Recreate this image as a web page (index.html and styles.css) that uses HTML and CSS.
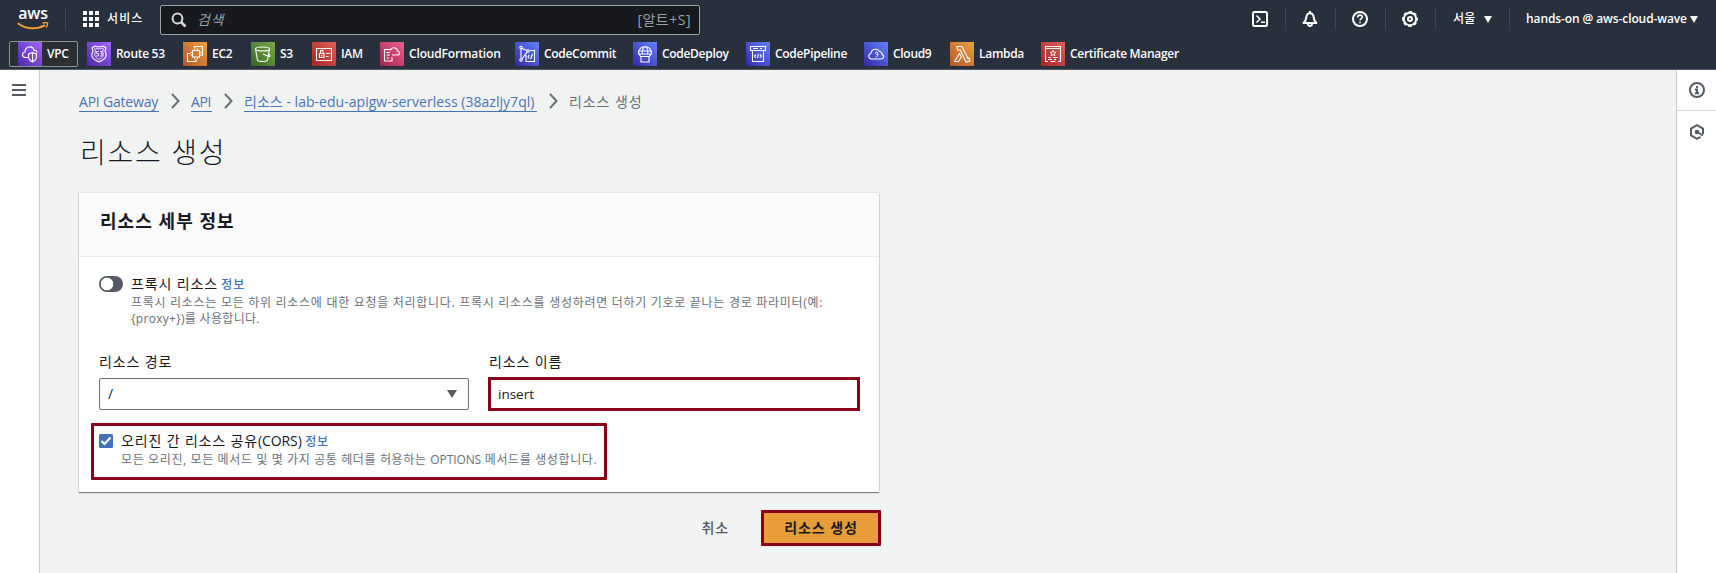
FILE: index.html
```html
<!DOCTYPE html>
<html lang="ko">
<head>
<meta charset="utf-8">
<title>리소스 생성 - API Gateway</title>
<link rel="stylesheet" href="styles.css">
</head>
<body>
<header class="topbar">
  <div class="nav">
    <div class="logo">
      <span>aws</span>
      <svg width="32" height="8" viewBox="0 0 32 8" fill="none" stroke="#f29d35"><path d="M.8 1.300C9 7.500 20 7.800 28 3.200" stroke-width="2"/><path d="M25.500 1.300c2-.9 4.200-.9 5-.3.300 1.300-.5 3.400-1.700 4.600" stroke-width="1.400"/></svg>
    </div>
    <i class="sep sep-logo"></i>
    <svg class="apps" width="16" height="16" viewBox="0 0 16 16" fill="#fff"><path d="M0 0h4v4H0zM6 0h4v4H6zM12 0h4v4h-4zM0 6h4v4H0zM6 6h4v4H6zM12 6h4v4h-4zM0 12h4v4H0zM6 12h4v4H6zM12 12h4v4h-4z"/></svg>
    <span class="services">서비스</span>
    <div class="search">
      <svg width="16" height="16" viewBox="0 0 16 16" fill="none" stroke="#d5dbdb" stroke-width="2"><circle cx="6.500" cy="6.500" r="4.900"/><path d="M10 10l4.500 4.500" stroke-width="2.600"/></svg>
      <em>검색</em><span class="hint">[알트+S]</span>
    </div>
    <div class="tools">
      <svg class="tool" width="16" height="16" viewBox="0 0 16 16" fill="none" stroke="#fff" stroke-width="2"><rect x="1" y="1" width="14" height="14" rx="1.500"/><path d="M4.500 4.500L8 8l-3.500 3.500M9 11.300h4" stroke-width="1.600"/></svg>
      <i class="sep"></i>
      <svg class="tool" width="16" height="16" viewBox="0 0 16 16" fill="none" stroke="#fff" stroke-width="2"><path d="M1.500 12C4 10 4 8.500 4.300 6.500 4.600 4 6 2.300 8 2.300s3.400 1.700 3.700 4.200c.3 2 .3 3.500 2.800 5.500z" stroke-linejoin="round"/><path d="M8 0v2M6 13c0 2.700 4 2.700 4 0"/></svg>
      <i class="sep"></i>
      <svg class="tool" width="16" height="16" viewBox="0 0 16 16" fill="none" stroke="#fff" stroke-width="2"><circle cx="8" cy="8" r="7"/><path d="M5.600 6.500C5.600 3.200 10.500 3.400 10.300 6.300 10.200 7.700 8 7.700 8 9.500M8 10.700v1.600" stroke-width="1.600"/></svg>
      <i class="sep"></i>
      <svg class="tool" width="16" height="16" viewBox="0 0 16 16" fill="none" stroke="#fff" stroke-width="2"><circle cx="8" cy="8" r="6.200"/><circle cx="8" cy="8" r="7.100" stroke-width="1.700" stroke-dasharray="3.350 2.230" stroke-dashoffset="1.700"/><circle cx="8" cy="8" r="2"/></svg>
      <i class="sep"></i>
      <span class="menu region">서울<svg width="8" height="7" viewBox="0 0 8 7" fill="#fff"><path d="M0 0h8L4 7z"/></svg></span>
      <i class="sep"></i>
      <span class="menu account"><b>hands-on @ aws-cloud-wave</b><svg width="8" height="7" viewBox="0 0 8 7" fill="#fff"><path d="M0 0h8L4 7z"/></svg></span>
    </div>
  </div>
  <nav class="favorites">
    <a class="fav current w-vpc"><svg class="ico purple" viewBox="0 0 24 24"><path d="M11 15.500H7.500C3.500 15 3.500 10.500 7 10c0-6 8-7 9-1.500 2-.5 3 .5 3 2M14.500 10.500l4 1.500c0 4 0 6-4 8-4-2-4-4-4-8zM14.500 10.500V20"/></svg>VPC</a>
    <a class="fav w-r53"><svg class="ico purple" viewBox="0 0 24 24"><path d="M5 6l2.500-2L12 5l4.500-1L19 6l-1 3c3 6 0 8-6 11-6-3-9-5-6-11z"/><path d="M7.500 7l1-1 3.500 1 3.500-1 1 1-1 2.500c2 4 0 6-3.500 8-3.500-2-5.500-4-3.500-8zM11.500 9.500H9.500v2h2v2.500H9M13 9.500h2v2h-1M15 11.500V14h-2" stroke-width=".8"/></svg>Route 53</a>
    <a class="fav w-ec2"><svg class="ico orange" viewBox="0 0 24 24"><path d="M9.500 8.500h7v6.500h-7zM11.500 6.500v2M14.500 6.500v2M11.500 15v2M14.500 15v2M7.500 10.500h2M7.500 13h2M16.500 10.500h2M16.500 13h2M11.500 6V4.500h8v8.500H18M7.500 11.500h-3v8H13V17"/></svg>EC2</a>
    <a class="fav w-s3"><svg class="ico green" viewBox="0 0 24 24"><ellipse cx="11.500" cy="7" rx="7" ry="2"/><path d="M4.500 7L6.500 18c1 2 9 2 10 0l2-11M12 12l6 2.500c2 .3 1-1.500 0-2"/></svg>S3</a>
    <a class="fav w-iam"><svg class="ico red" viewBox="0 0 24 24"><path d="M4.500 6.500h15v12h-15zM7.500 11.500h4.500v4H7.500zM8.500 11.500V9c0-1 2.500-1 2.500 0v2.500M14 11.500h4M14 14.500h2.500M9.700 13v1.500"/></svg>IAM</a>
    <a class="fav w-cf"><svg class="ico pink" viewBox="0 0 24 24"><path d="M10 7.500H4.500v11.500H12V15M6.500 10.500H10M6.500 13H10M6.500 16H9M12 13h5c3.500 0 3-4 .5-4-.5-4-6.500-4.500-7-.5"/></svg>CloudFormation</a>
    <a class="fav w-cc"><svg class="ico blue" viewBox="0 0 24 24"><circle cx="6" cy="5.500" r="1.200"/><circle cx="6" cy="18" r="1.200"/><circle cx="13" cy="9" r="1.200"/><path d="M6 7v9.500M7 6.500L12 8.500M7 17l5-7M11 13v6.500h8.500v-11H15M14 13l-1 2 1 1.500M17.500 12l-2 5"/></svg>CodeCommit</a>
    <a class="fav w-cd"><svg class="ico blue" viewBox="0 0 24 24"><path d="M5.500 12C5 2 19 2 18.500 12zM5.500 9h13M9.500 12c-1-4 1-7 2.500-7.500 2 1 3.500 4 2.500 7.500M8 14.500h8v5.500H8zM6 12l2 3M18 12l-2 3"/></svg>CodeDeploy</a>
    <a class="fav w-cp"><svg class="ico blue" viewBox="0 0 24 24"><path d="M4.500 4.500h15v4h-15zM6.500 8.500h11v11h-11zM7 6.500h5M14 6.500h2M10 12.500l-1.500 1.500 1.500 2M14 12.500l1.500 1.500-1.500 2M12.500 12l-1 4"/></svg>CodePipeline</a>
    <a class="fav w-c9"><svg class="ico blue" viewBox="0 0 24 24"><path d="M7.500 17C4 16.500 4 12 7 11.500c.5-5 7-5.500 8.500-2 2 0 2.500 1.500 2.500 3 3 1 1.500 4.500-1 4.500z"/><path d="M13.800 12.200c-2.300 1.300-3-2-1.200-2.200 2 0 1.700 5-.8 5" stroke-width=".9"/></svg>Cloud9</a>
    <a class="fav w-la"><svg class="ico orange" viewBox="0 0 24 24"><path d="M7 4.500h5l6 12 1-.5 1 3-4 1L11 9.500 10.500 8H7.500zM9.500 11.500l2 3.500-3 4.500H4.500z"/></svg>Lambda</a>
    <a class="fav"><svg class="ico red" viewBox="0 0 24 24"><path d="M7 19.500H4.500v-15h15v15H17M4.500 6.500h15M7 15.500h3M12 15.500h5M7 17.500h4M13 17.500h2M9.500 19.500h5"/><path d="M12 8.300l.9 2h2.100l-1.600 1.400.5 2-1.900-1-1.900 1 .5-2L9 10.300h2.100z" stroke-width=".9"/></svg>Certificate Manager</a>
  </nav>
</header>
<div class="shell">
  <aside class="rail left"><svg width="14" height="12" viewBox="0 0 14 12" fill="#545b64"><path d="M0 0h14v2H0zM0 5h14v2H0zM0 10h14v2H0z"/></svg></aside>
  <main class="content">
    <nav class="crumbs">
      <a class="c1">API Gateway</a><svg class="chev" viewBox="0 0 9 16"><path d="M1 1l6.500 7L1 15"/></svg>
      <a class="c2">API</a><svg class="chev" viewBox="0 0 9 16"><path d="M1 1l6.500 7L1 15"/></svg>
      <a class="c3">리소스 - lab-edu-apigw-serverless (38azljy7ql)</a><svg class="chev" viewBox="0 0 9 16"><path d="M1 1l6.500 7L1 15"/></svg>
      <span>리소스 생성</span>
    </nav>
    <h1>리소스 생성</h1>
    <section class="card">
      <h2>리소스 세부 정보</h2>
      <div class="body">
        <div class="proxy">
          <span class="toggle"></span>
          <div>
            <div class="label">프록시 리소스 <a class="info">정보</a></div>
            <p class="desc">프록시 리소스는 모든 하위 리소스에 대한 요청을 처리합니다. 프록시 리소스를 생성하려면 더하기 기호로 끝나는 경로 파라미터(예:<br><span class="tight">{proxy+})를 사용합니다.</span></p>
          </div>
        </div>
        <div class="fields">
          <div><div class="label">리소스 경로</div><div class="select">/<svg width="10" height="8" viewBox="0 0 10 8" fill="#545b64"><path d="M0 0h10L5 8z"/></svg></div></div>
          <div><div class="label">리소스 이름</div><div class="input">insert</div></div>
        </div>
        <div class="cors">
          <svg class="check" width="14" height="14" viewBox="0 0 14 14"><rect width="14" height="14" rx="1.500" fill="#4273b9"/><path d="M2.500 7l3 3 6-6.500" fill="none" stroke="#fff" stroke-width="2"/></svg>
          <div>
            <div class="label">오리진 간 리소스 공유<span class="latin">(CORS)</span> <a class="info">정보</a></div>
            <p class="desc">모든 오리진, 모든 메서드 및 몇 가지 공통 헤더를 허용하는 <span class="latin">OPTIONS</span> 메서드를 생성합니다.</p>
          </div>
        </div>
      </div>
    </section>
    <div class="actions"><a class="cancel">취소</a><a class="submit">리소스 생성</a></div>
  </main>
  <aside class="rail right">
    <div class="tab first"><svg width="16" height="16" viewBox="0 0 16 16" fill="none" stroke="#545b64" stroke-width="2"><circle cx="8" cy="8" r="7"/><path d="M8 4v2M6 7.500h2V11M5.800 11.200h4.400"/></svg></div>
    <div class="tab"><svg width="16" height="16" viewBox="0 0 16 16" fill="none" stroke="#545b64" stroke-width="2"><path d="M14 10V4.500L8 1.200 2 4.500v7l6 3.300 3.500-2M8 8l6 3.500"/><circle cx="8" cy="8" r="1.300" fill="#545b64"/></svg></div>
  </aside>
</div>
</body>
</html>
```
FILE: styles.css
```css
* { box-sizing: border-box; }
body { margin: 0; height: 573px; overflow: hidden; display: flex; flex-direction: column; font: 14px/22px "Open Sans", "Noto Sans CJK KR", sans-serif; color: #16191f; background: #f1f3f3; }
h1, h2, p { margin: 0; }
svg { flex: none; display: block; }

.topbar { height: 70px; flex: none; background: #282f3d; border-bottom: 1px solid #545b64; color: #fff; }
.nav { height: 38px; display: flex; align-items: center; padding-left: 17px; }
.logo { width: 32px; height: 30px; flex: none; display: flex; flex-direction: column; align-items: center; }
.logo span { font-weight: 600; font-size: 16px; line-height: 18px; letter-spacing: -.2px; }
.sep { width: 1px; height: 22px; background: #414750; flex: none; }
.sep-logo { margin: 0 17px 0 16px; }
.services { width: 53px; flex: none; margin-left: 8px; font-size: 12px; font-weight: 500; letter-spacing: 1.1px; }
.search { width: 540px; flex: none; height: 30px; margin-top: 2px; display: flex; align-items: center; padding: 0 8px 0 10px; border: 1px solid #95a5a6; border-radius: 2px; background: #17191e; color: #95a5a6; letter-spacing: .5px; }
.search em { margin-left: 10px; }
.hint { margin-left: auto; font-size: 14px; letter-spacing: .5px; }
.tools { display: flex; align-items: center; margin-left: auto; padding-right: 18px; }
.tool { margin: 0 17px 0 16px; }
.menu { display: flex; align-items: center; justify-content: space-between; font-size: 12px; }
.region { width: 39px; margin: 0 17px; font-weight: 500; letter-spacing: .3px; }
.account { width: 172px; margin-left: 16px; }
.account b { font-weight: 600; letter-spacing: -.1px; white-space: nowrap; }

.favorites { display: flex; padding: 3px 0 0 9px; }
.fav { height: 26px; display: flex; align-items: center; gap: 5px; padding-left: 9px; font-size: 12px; font-weight: 600; letter-spacing: -.3px; white-space: nowrap; }
.current { border: 1px solid #879596; border-radius: 2px; background: #2b2e33; padding-left: 8px; }
.w-vpc { width: 69px; } .w-r53 { width: 96px; } .w-ec2 { width: 68px; } .w-s3 { width: 61px; }
.w-iam { width: 68px; } .w-cf { width: 135px; letter-spacing: -.15px; } .w-cc { width: 118px; } .w-cd { width: 113px; }
.w-cp { width: 118px; } .w-c9 { width: 86px; } .w-la { width: 91px; }
.ico { width: 24px; height: 24px; fill: none; stroke: #fff; stroke-width: 1.1; }
.purple { background: linear-gradient(45deg, #4d27a8, #a166ff); }
.orange { background: linear-gradient(45deg, #b8532a, #eca23c); }
.green { background: linear-gradient(45deg, #35681f, #7ba94f); }
.red { background: linear-gradient(45deg, #a52320, #e0605a); }
.pink { background: linear-gradient(45deg, #a0244f, #e8628d); }
.blue { background: linear-gradient(45deg, #3328a5, #6282fa); }

.shell { flex: 1; display: flex; }
.rail { width: 40px; background: #fff; flex: none; }
.left { border-right: 1px solid #c9cccc; padding: 14px 0 0 12px; }
.right { border-left: 1px solid #c9cccc; }
.tab { height: 41px; display: flex; align-items: center; justify-content: center; padding-top: 1px; }
.first { border-bottom: 1px solid #d5dbdb; padding: 0; }
.content { flex: 1; padding: 20px 0 0 39px; }

.crumbs { display: flex; align-items: center; height: 22px; color: #687078; white-space: nowrap; }
.crumbs a { color: #4a74b4; height: 21px; line-height: 21px; border-bottom: 1px solid #4273b9; }
.crumbs span { line-height: 21px; letter-spacing: .9px; }
.chev { width: 9px; height: 16px; margin: 0 11px 0 12px; fill: none; stroke: #687078; stroke-width: 2; }
.c1 { width: 80px; letter-spacing: -.2px; } .c2 { width: 21px; letter-spacing: -.4px; } .c3 { width: 293px; letter-spacing: .03px; }
h1 { margin-top: 21px; padding: 1px 0 0 1px; height: 60px; font-size: 28px; line-height: 36px; font-weight: 300; letter-spacing: 1.7px; }
.card { width: 800px; height: 299px; background: #fff; box-shadow: 0 1px 1px #7a8082, 0 0 1px #999; }
h2 { height: 64px; padding: 17px 21px; background: #fafafa; border-bottom: 1px solid #eaeded; font-size: 18px; line-height: 22px; font-weight: 600; letter-spacing: 1.05px; }
.body { padding: 16px 20px 0; }
.proxy { display: flex; gap: 8px; }
.toggle { width: 24px; height: 16px; margin-top: 3px; border-radius: 8px; background: radial-gradient(circle at 8px 8px, #fff 6px, #545b64 6.6px); }
.label { letter-spacing: .85px; white-space: nowrap; }
.info { font-size: 12px; color: #4273b9; font-weight: 500; margin-left: -1px; }
.desc { color: #687078; margin-top: -1px; font-size: 12px; line-height: 16px; letter-spacing: .71px; white-space: nowrap; }
.tight { letter-spacing: .3px; }
.latin { letter-spacing: -.1px; }
.fields { display: grid; grid-template-columns: 370px 370px; gap: 20px; margin-top: 24px; }
.fields .label { height: 27px; }
.select, .input { height: 32px; border: 1px solid #687078; border-radius: 2px; padding: 0 11px 0 8px; display: flex; align-items: center; justify-content: space-between; }
.input { outline: 3px solid #8b0019; outline-offset: -2px; border: 0; border-radius: 0; padding-left: 9px; font-size: 13.5px; }
.cors { width: 516px; height: 57px; margin: 13px 0 0 -8px; padding: 4px 5px; display: flex; gap: 8px; border: 3px solid #8b0019; border-radius: 1px; }
.cors .desc { letter-spacing: .62px; }
.cors .desc .latin { letter-spacing: -.1px; }
.check { margin-top: 4px; }
.actions { width: 802px; display: flex; justify-content: flex-end; align-items: center; margin-top: 18px; gap: 32px; letter-spacing: .9px; }
.cancel { color: #545b64; font-weight: 500; }
.submit { width: 120px; height: 36px; border: 3px solid #8b0019; border-radius: 1px; background: #e89c3a; line-height: 29px; text-align: center; font-weight: 600; }
```
